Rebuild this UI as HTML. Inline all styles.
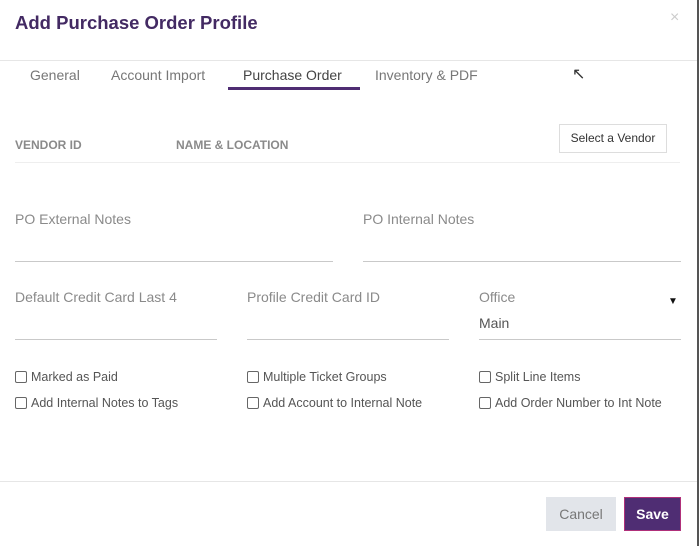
<!DOCTYPE html>
<html><head><style>
body{margin:0;width:699px;height:546px;background:#fff;font-family:"Liberation Sans",sans-serif;position:relative;overflow:hidden}
.a{position:absolute;white-space:nowrap}
.lbl{font-size:14px;color:#8a8a8a}
.line{position:absolute;height:1px;background:#c9c9c9}
.cb{position:absolute;font-size:12.5px;color:#555;white-space:nowrap}
.cb i{display:inline-block;width:12px;height:12px;border:1px solid #666;border-radius:2px;vertical-align:-2px;margin-right:4px;box-sizing:border-box}
</style></head><body>
<div class="a" style="left:15px;top:12px;font-size:18.5px;font-weight:bold;color:#432a63">Add Purchase Order Profile</div>
<div class="a" style="left:670px;top:9px;font-size:16px;color:#ccc">×</div>
<div style="position:absolute;left:697px;top:0;width:2px;height:546px;background:#555"></div>
<div class="line" style="left:0;top:60px;width:697px;background:#e6e6e6"></div>
<div class="a" style="left:30px;top:67px;font-size:14px;color:#777">General</div>
<div class="a" style="left:111px;top:67px;font-size:14px;color:#777">Account Import</div>
<div class="a" style="left:243px;top:67px;font-size:14px;color:#444">Purchase Order</div>
<div class="a" style="left:375px;top:67px;font-size:14px;color:#777">Inventory &amp; PDF</div>
<div style="position:absolute;left:228px;top:87px;width:132px;height:3px;background:#4f2d73"></div>
<div class="a" style="left:572px;top:64px;font-size:16px;color:#333">&#8598;</div>
<div class="a" style="left:15px;top:138px;font-size:12px;font-weight:bold;color:#8a8a8a">VENDOR ID</div>
<div class="a" style="left:176px;top:138px;font-size:12px;font-weight:bold;color:#8a8a8a">NAME &amp; LOCATION</div>
<div style="position:absolute;left:559px;top:124px;width:108px;height:29px;border:1px solid #ddd;box-sizing:border-box;font-size:12px;color:#333;text-align:center;line-height:27px">Select a Vendor</div>
<div class="line" style="left:15px;top:162px;width:665px;background:#eee"></div>
<div class="a lbl" style="left:15px;top:211px">PO External Notes</div>
<div class="a lbl" style="left:363px;top:211px">PO Internal Notes</div>
<div class="line" style="left:15px;top:261px;width:318px"></div>
<div class="line" style="left:363px;top:261px;width:318px"></div>
<div class="a lbl" style="left:15px;top:289px">Default Credit Card Last 4</div>
<div class="a lbl" style="left:247px;top:289px">Profile Credit Card ID</div>
<div class="a lbl" style="left:479px;top:289px">Office</div>
<div class="a" style="left:668px;top:296px;font-size:10px;color:#111">▼</div>
<div class="a" style="left:479px;top:315px;font-size:14px;color:#555">Main</div>
<div class="line" style="left:15px;top:339px;width:202px"></div>
<div class="line" style="left:247px;top:339px;width:202px"></div>
<div class="line" style="left:479px;top:339px;width:202px"></div>
<div class="cb" style="left:15px;top:370px"><i></i>Marked as Paid</div>
<div class="cb" style="left:247px;top:370px"><i></i>Multiple Ticket Groups</div>
<div class="cb" style="left:479px;top:370px"><i></i>Split Line Items</div>
<div class="cb" style="left:15px;top:396px"><i></i>Add Internal Notes to Tags</div>
<div class="cb" style="left:247px;top:396px"><i></i>Add Account to Internal Note</div>
<div class="cb" style="left:479px;top:396px"><i></i>Add Order Number to Int Note</div>
<div class="line" style="left:0;top:481px;width:697px;background:#e6e6e6"></div>
<div style="position:absolute;left:546px;top:497px;width:70px;height:34px;background:#e2e5ea;color:#777;font-size:14px;text-align:center;line-height:34px">Cancel</div>
<div style="position:absolute;left:624px;top:497px;width:57px;height:34px;background:#4f2d73;border:1px solid #b0307a;box-sizing:border-box;color:#fff;font-weight:bold;font-size:14px;text-align:center;line-height:32px">Save</div>
</body></html>
